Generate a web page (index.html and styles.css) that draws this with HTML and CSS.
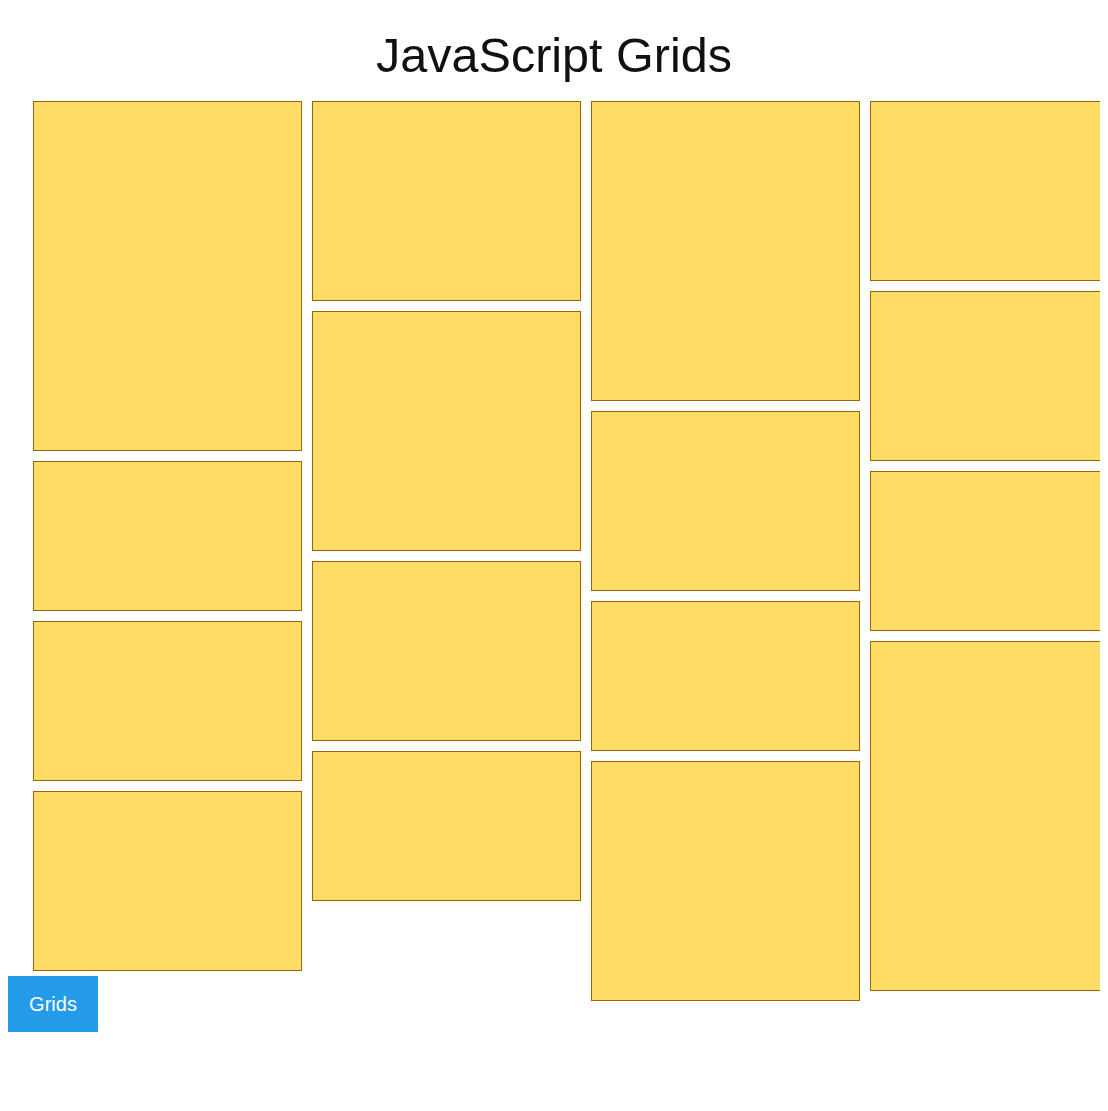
FILE: index.html
```html
<!DOCTYPE html>
<html>
    <head>
        <meta name="viewport" content="width=device-width, initial-scale=1.0">
        <link rel="stylesheet" href="styles.css">
    </head>
    <body>
        <h1 class="title">JavaScript Grids</h1>
        <div class="grid">
            <div class="column">
                <div class="box h350"></div>
                <div class="box h150"></div>
                <div class="box h160"></div>
                <div class="box h180"></div>
            </div>
            <div class="column">
                <div class="box h200"></div>
                <div class="box h240"></div>
                <div class="box h180"></div>
                <div class="box h150"></div>
            </div>
            <div class="column">
                <div class="box h300"></div>
                <div class="box h180"></div>
                <div class="box h150"></div>
                <div class="box h240"></div>
            </div>
            <div class="column">
                <div class="box h180"></div>
                <div class="box h170"></div>
                <div class="box h160"></div>
                <div class="box h350"></div>
            </div>
        </div>
        <button class="gridsButton">Grids</button>
    </body>
</html>
```

FILE: styles.css
```css
body {
    margin: 8px;
    font-family: "Liberation Sans", Arial, sans-serif;
    background: white;
}
.title {
    margin: 20px 0 19px 0;
    font-size: 48.5px;
    line-height: 54px;
    font-weight: normal;
    text-align: center;
    color: #111;
}
.grid {
    display: flex;
    gap: 10px;
    margin: 0 -8px 0 25px;
    height: 875px;
    overflow-x: clip;
}
.column {
    display: flex;
    flex-direction: column;
    gap: 10px;
    width: 269px;
    flex: none;
}
.box {
    box-sizing: border-box;
    flex: none;
    background: #fedc66;
    border: 1px solid #996600;
}
.h150 { height: 150px; }
.h160 { height: 160px; }
.h170 { height: 170px; }
.h180 { height: 180px; }
.h200 { height: 200px; }
.h240 { height: 240px; }
.h300 { height: 300px; }
.h350 { height: 350px; }
.gridsButton {
    display: block;
    width: 90px;
    height: 56px;
    border: 0;
    margin: 0;
    padding: 0;
    background: #239be8;
    color: white;
    font-family: "Liberation Sans", Arial, sans-serif;
    font-size: 20px;
    cursor: pointer;
}
```
